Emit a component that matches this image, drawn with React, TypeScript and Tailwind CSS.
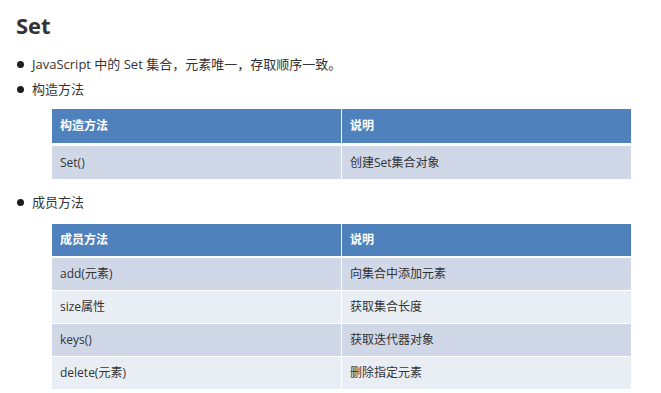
import React from "react";

const font = {
  fontFamily: '"Open Sans", "Noto Sans CJK SC", sans-serif',
};

function Bullet({ children, className = "" }: { children: React.ReactNode; className?: string }) {
  return (
    <div className={`flex items-center h-[25px] text-[13px] text-[#333333] ${className}`}>
      <span className="ml-[1px] w-[7px] h-[7px] rounded-full bg-[#1e1e1e] shrink-0" />
      <span className="ml-[8px] leading-[25px]">{children}</span>
    </div>
  );
}

function Table({
  head,
  rows,
  headH,
  headGap,
  rowH,
  className = "",
}: {
  head: [string, string];
  rows: [string, string][];
  headH: string;
  headGap: string;
  rowH: string;
  className?: string;
}) {
  return (
    <div className={`ml-9 w-[579px] flex flex-col ${className}`}>
      <div className={`grid grid-cols-2 gap-x-[1px] ${headH}`}>
        <div className="bg-[#4f81bd] flex items-center pl-2 text-white font-bold text-[12px]">{head[0]}</div>
        <div className="bg-[#4f81bd] flex items-center pl-2 text-white font-bold text-[12px]">{head[1]}</div>
      </div>
      <div className={`flex flex-col gap-y-[1px] ${headGap}`}>
        {rows.map((r, i) => {
          const bg = i % 2 === 0 ? "bg-[#d0d8e8]" : "bg-[#e9edf4]";
          return (
            <div key={i} className={`grid grid-cols-2 gap-x-[1px] ${rowH}`}>
              <div className={`${bg} flex items-center pl-2 text-[12px] text-[#333333]`}>{r[0]}</div>
              <div className={`${bg} flex items-center pl-2 text-[12px] text-[#333333]`}>{r[1]}</div>
            </div>
          );
        })}
      </div>
    </div>
  );
}

export default function App() {
  return (
    <div className="w-[661px] h-[393px] bg-white pl-4 overflow-hidden" style={font}>
      <div className="pt-[10px] h-[40px] text-[22px] leading-[30px] font-bold text-[#333333]">Set</div>
      <Bullet className="mt-[12px]">JavaScript 中的 Set 集合，元素唯一，存取顺序一致。</Bullet>
      <Bullet>构造方法</Bullet>
      <Table
        className="mt-[7px]"
        head={["构造方法", "说明"]}
        rows={[["Set()", "创建Set集合对象"]]}
        headH="h-[34px]"
        headGap="mt-[3px]"
        rowH="h-[33px]"
      />
      <Bullet className="mt-[11px]">成员方法</Bullet>
      <Table
        className="mt-[9px]"
        head={["成员方法", "说明"]}
        rows={[
          ["add(元素)", "向集合中添加元素"],
          ["size属性", "获取集合长度"],
          ["keys()", "获取迭代器对象"],
          ["delete(元素)", "删除指定元素"],
        ]}
        headH="h-[32px]"
        headGap="mt-[2px]"
        rowH="h-[32px]"
      />
    </div>
  );
}
